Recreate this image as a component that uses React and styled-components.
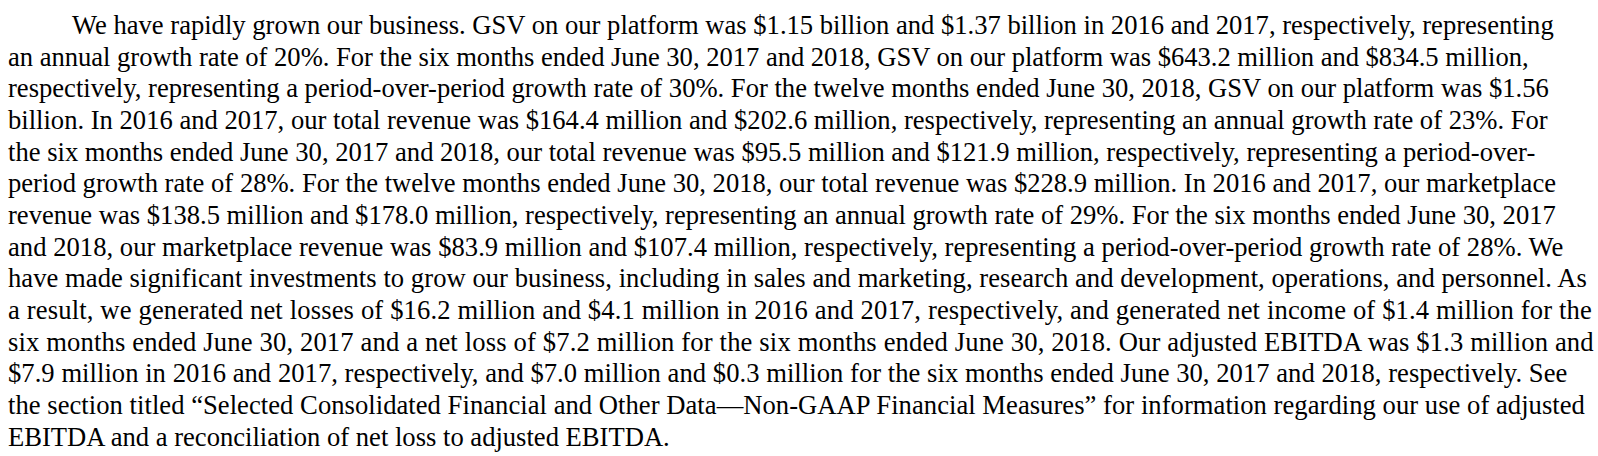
import styled, { createGlobalStyle } from "styled-components";

const GlobalStyle = createGlobalStyle`
  html, body {
    margin: 0;
    padding: 0;
    background: #ffffff;
  }
`;

const Page = styled.div`
  padding: 10px 8px 0 8px;
  width: 1598px;
  box-sizing: border-box;
`;

const Paragraph = styled.p`
  margin: 0;
  font-family: "Liberation Serif", "Times New Roman", serif;
  font-size: 26.6px;
  line-height: 31.65px;
  color: #000000;
  text-indent: 64px;
  white-space: nowrap;
`;

const Line = styled.span`
  letter-spacing: ${(props) => props.$tracking || 0}px;
`;

const lines = [
  ["We have rapidly grown our business. GSV on our platform was $1.15 billion and $1.37 billion in 2016 and 2017, respectively, representing", 0],
  ["an annual growth rate of 20%. For the six months ended June 30, 2017 and 2018, GSV on our platform was $643.2 million and $834.5 million,", -0.02],
  ["respectively, representing a period-over-period growth rate of 30%. For the twelve months ended June 30, 2018, GSV on our platform was $1.56", 0],
  ["billion. In 2016 and 2017, our total revenue was $164.4 million and $202.6 million, respectively, representing an annual growth rate of 23%. For", 0],
  ["the six months ended June 30, 2017 and 2018, our total revenue was $95.5 million and $121.9 million, respectively, representing a period-over-", 0],
  ["period growth rate of 28%. For the twelve months ended June 30, 2018, our total revenue was $228.9 million. In 2016 and 2017, our marketplace", 0],
  ["revenue was $138.5 million and $178.0 million, respectively, representing an annual growth rate of 29%. For the six months ended June 30, 2017", 0],
  ["and 2018, our marketplace revenue was $83.9 million and $107.4 million, respectively, representing a period-over-period growth rate of 28%. We", 0.03],
  ["have made significant investments to grow our business, including in sales and marketing, research and development, operations, and personnel. As", 0.05],
  ["a result, we generated net losses of $16.2 million and $4.1 million in 2016 and 2017, respectively, and generated net income of $1.4 million for the", 0.15],
  ["six months ended June 30, 2017 and a net loss of $7.2 million for the six months ended June 30, 2018. Our adjusted EBITDA was $1.3 million and", 0.15],
  ["$7.9 million in 2016 and 2017, respectively, and $7.0 million and $0.3 million for the six months ended June 30, 2017 and 2018, respectively. See", 0.04],
  ["the section titled \u201cSelected Consolidated Financial and Other Data\u2014Non-GAAP Financial Measures\u201d for information regarding our use of adjusted", 0.04],
  ["EBITDA and a reconciliation of net loss to adjusted EBITDA.", 0],
];

export default function App() {
  return (
    <>
      <GlobalStyle />
      <Page>
        <Paragraph>
          {lines.map(([text, tracking], i) => (
            <Line key={i} $tracking={tracking}>
              {text}
              {i < lines.length - 1 && <br />}
            </Line>
          ))}
        </Paragraph>
      </Page>
    </>
  );
}
